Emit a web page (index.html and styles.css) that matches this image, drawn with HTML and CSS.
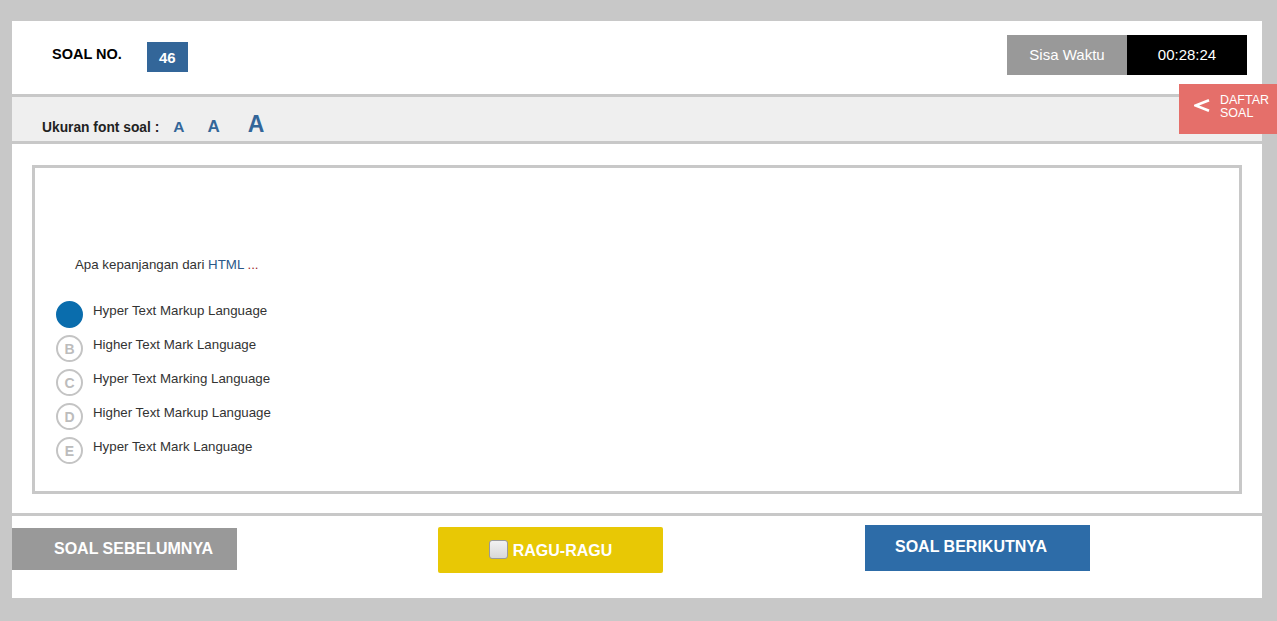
FILE: index.html
```html
<!DOCTYPE html>
<html>
<head>
<meta charset="utf-8">
<title>Soal</title>
<link rel="stylesheet" href="styles.css">
</head>
<body>
<div class="page">
  <div class="header">
    <div class="soal-no">SOAL NO.</div>
    <div class="no-box">46</div>
    <div class="timer">
      <div class="timer-label">Sisa Waktu</div>
      <div class="timer-value">00:28:24</div>
    </div>
  </div>
  <div class="fontbar">
    <span class="fontbar-label">Ukuran font soal :</span>
    <span class="fa fa-sm">A</span>
    <span class="fa fa-md">A</span>
    <span class="fa fa-lg">A</span>
  </div>
  <div class="daftar">
    <svg class="chev" width="16" height="13" viewBox="0 0 16 13"><polyline points="15,1.2 1.5,6.5 15,11.8" fill="none" stroke="#fff" stroke-width="2.6" stroke-linejoin="miter"/></svg>
    <div class="daftar-text"><div>DAFTAR</div><div>SOAL</div></div>
  </div>
  <div class="content">
    <div class="qbox">
      <div class="question">Apa kepanjangan dari <span class="q-html">HTML</span> <span class="q-dots">...</span></div>
      <div class="options">
        <div class="opt"><span class="circle filled"></span><span class="opt-text">Hyper Text Markup Language</span></div>
        <div class="opt"><span class="circle">B</span><span class="opt-text">Higher Text Mark Language</span></div>
        <div class="opt"><span class="circle">C</span><span class="opt-text">Hyper Text Marking Language</span></div>
        <div class="opt"><span class="circle">D</span><span class="opt-text">Higher Text Markup Language</span></div>
        <div class="opt"><span class="circle">E</span><span class="opt-text">Hyper Text Mark Language</span></div>
      </div>
    </div>
  </div>
  <div class="footer">
    <div class="btn btn-prev">SOAL SEBELUMNYA</div>
    <div class="btn btn-ragu"><span class="check"></span>RAGU-RAGU</div>
    <div class="btn btn-next">SOAL BERIKUTNYA</div>
  </div>
</div>
</body>
</html>
```

FILE: styles.css
```css
html, body {
  margin: 0;
  padding: 0;
}
body {
  background: #c8c8c8;
  font-family: "Liberation Sans", Arial, sans-serif;
  width: 1277px;
  height: 621px;
  overflow: hidden;
}
.page {
  position: relative;
  margin: 21px 0 0 12px;
  width: 1250px;
  height: 577px;
  background: #fff;
}
.header {
  display: flex;
  align-items: flex-start;
  height: 73px;
  padding-left: 40px;
  border-bottom: 3px solid #c8c8c8;
}
.soal-no {
  margin-top: 25px;
  font-size: 14.5px;
  line-height: 17px;
  font-weight: bold;
  color: #000;
}
.no-box {
  margin-top: 21px;
  margin-left: 25px;
  width: 41px;
  height: 30px;
  background: #336699;
  color: #fff;
  font-size: 15px;
  font-weight: bold;
  display: flex;
  align-items: center;
  justify-content: center;
  padding-top: 1px;
  box-sizing: border-box;
}
.timer {
  margin-left: auto;
  margin-right: 15px;
  margin-top: 14px;
  display: flex;
  height: 40px;
}
.timer-label, .timer-value {
  width: 120px;
  display: flex;
  align-items: center;
  justify-content: center;
  font-size: 15px;
  color: #fff;
  padding-bottom: 1px;
  box-sizing: border-box;
}
.timer-label { background: #999999; }
.timer-value { background: #000; }
.fontbar {
  display: flex;
  align-items: baseline;
  height: 44px;
  box-sizing: content-box;
  padding: 15px 0 0 30px;
  height: 29px;
  background: #efefef;
  border-bottom: 3px solid #c8c8c8;
}
.fontbar-label {
  font-size: 13.8px;
  line-height: 24px;
  font-weight: bold;
  color: #222;
}
.fa {
  color: #336699;
  font-weight: bold;
  line-height: 24px;
}
.fa-sm { font-size: 15.5px; margin-left: 14px; }
.fa-md { font-size: 17px; margin-left: 23px; }
.fa-lg { font-size: 23px; margin-left: 28px; }
.daftar {
  position: absolute;
  top: 63px;
  right: -15px;
  width: 98px;
  height: 50px;
  background: #e56f6a;
  display: flex;
  align-items: flex-start;
  box-sizing: border-box;
  padding-left: 15px;
}
.chev {
  margin-top: 15px;
  display: block;
}
.daftar-text {
  margin-top: 10px;
  margin-left: 10px;
  font-size: 12.5px;
  line-height: 13px;
  color: #fff;
}
.content {
  padding: 21px 20px 19px 20px;
  border-bottom: 3px solid #c8c8c8;
}
.qbox {
  height: 329px;
  box-sizing: border-box;
  border: 3px solid #c8c8c8;
  padding: 89px 0 0 0;
}
.question {
  padding-left: 40px;
  font-size: 13.3px;
  line-height: 16px;
  color: #333;
}
.q-html { color: #2a5888; }
.q-dots { color: #a02a2a; }
.options {
  margin-top: 28px;
  padding-left: 21px;
}
.opt {
  display: flex;
  align-items: flex-start;
  height: 34px;
}
.circle {
  width: 27px;
  height: 27px;
  border-radius: 50%;
  box-sizing: border-box;
  border: 2.5px solid #c4c4c4;
  color: #bcbcbc;
  font-size: 14px;
  font-weight: bold;
  display: flex;
  align-items: center;
  justify-content: center;
  flex: none;
}
.circle.filled {
  background: #0a6dad;
  border-color: #0a6dad;
}
.opt-text {
  margin-left: 10px;
  margin-top: 2px;
  font-size: 13.3px;
  line-height: 16px;
  color: #333;
}
.footer {
  display: flex;
  align-items: flex-start;
  height: 82px;
}
.btn {
  width: 225px;
  box-sizing: border-box;
  display: flex;
  align-items: center;
  color: #fff;
  font-size: 16px;
  font-weight: bold;
}
.btn-prev {
  margin-top: 12px;
  height: 42px;
  background: #999999;
  padding-left: 42px;
}
.btn-ragu {
  margin-top: 11px;
  margin-left: 201px;
  height: 46px;
  background: #e8c805;
  border-radius: 2px;
  justify-content: center;
  padding-top: 1px;
}
.check {
  width: 19px;
  height: 19px;
  box-sizing: border-box;
  border: 1px solid #9a9a9a;
  border-radius: 3px;
  background: linear-gradient(#f2f2f2, #d8d8d8);
  margin-right: 5px;
  margin-top: -2px;
}
.btn-next {
  margin-top: 9px;
  margin-left: 202px;
  height: 46px;
  background: #2d6ca8;
  padding-left: 30px;
  padding-bottom: 2px;
}
```
